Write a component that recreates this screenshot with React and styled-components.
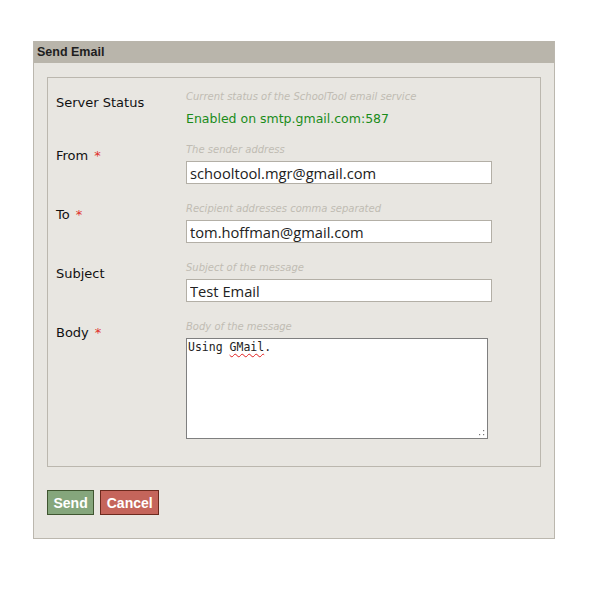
import React from "react";
import styled, { createGlobalStyle } from "styled-components";

const Global = createGlobalStyle`
  html, body {
    margin: 0;
    padding: 0;
    background: #ffffff;
  }
  body {
    font-family: "DejaVu Sans", sans-serif;
  }
`;

const fields = [
  { label: "From", hint: "The sender address", value: "schooltool.mgr@gmail.com", required: true },
  { label: "To", hint: "Recipient addresses comma separated", value: "tom.hoffman@gmail.com", required: true },
  { label: "Subject", hint: "Subject of the message", value: "Test Email" },
];

const App = () => {
  return (
    <Page>
      <Global />
      <Panel>
        <Header>Send Email</Header>
        <Fieldset>
          <Row>
            <Label>Server Status</Label>
            <Field>
              <Hint>Current status of the SchoolTool email service</Hint>
              <Status>Enabled on smtp.gmail.com:587</Status>
            </Field>
          </Row>
          {fields.map((f) => (
            <Row key={f.label}>
              <Label>
                {f.label}
                {f.required && <Star>*</Star>}
              </Label>
              <Field>
                <Hint>{f.hint}</Hint>
                <Input defaultValue={f.value} />
              </Field>
            </Row>
          ))}
          <Row $last>
            <Label>
              Body<Star>*</Star>
            </Label>
            <Field>
              <Hint>Body of the message</Hint>
              <TextBox>
                Using <Misspelled>GMail</Misspelled>.
                <Grip width="6" height="6" viewBox="0 0 6 6">
                  <rect x="4" y="0" width="1.2" height="1.2" fill="#777" />
                  <rect x="0" y="4" width="1.2" height="1.2" fill="#777" />
                  <rect x="4" y="4" width="1.2" height="1.2" fill="#777" />
                </Grip>
              </TextBox>
            </Field>
          </Row>
        </Fieldset>
        <Buttons>
          <Button $kind="send">Send</Button>
          <Button $kind="cancel">Cancel</Button>
        </Buttons>
      </Panel>
    </Page>
  );
};

export default App;

// styles

const Page = styled("div")`
  padding: 41px 0 0 33px;
`;

const Panel = styled("div")`
  width: 520px;
  background: #e8e6e1;
  border: 1px solid #bbb7ae;
  border-top: none;
  padding-bottom: 23px;
`;

const Header = styled("div")`
  height: 22px;
  line-height: 22px;
  background: #b9b5ab;
  padding-left: 3px;
  font-family: "Liberation Sans", sans-serif;
  font-weight: bold;
  font-size: 12.5px;
  color: #1e1e1e;
`;

const Fieldset = styled("div")`
  margin: 14px 13px 0 13px;
  border: 1px solid #bbb7ae;
  padding: 12px 0 27px 8px;
`;

const Row = styled("div")`
  display: grid;
  grid-template-columns: 130px 1fr;
  margin-bottom: ${(p) => (p.$last ? "0" : "18px")};

  &:first-child {
    margin-bottom: 15px;
  }
`;

const Label = styled("div")`
  font-size: 13px;
  line-height: 16px;
  margin-top: 5px;
  color: #111;
`;

const Star = styled("span")`
  color: #e0302a;
  margin-left: 6px;
  font-size: 13px;
`;

const Field = styled("div")`
  display: flex;
  flex-direction: column;
`;

const Hint = styled("div")`
  font-size: 10px;
  line-height: 14px;
  font-style: italic;
  color: #c0bcb3;
  margin-bottom: 4px;
`;

const Status = styled("div")`
  font-size: 12.5px;
  line-height: 18px;
  color: #1a8c1a;
  margin-top: 2px;
`;

const Input = styled("input")`
  box-sizing: border-box;
  width: 306px;
  height: 23px;
  border: 1px solid #b3afa6;
  background: #fff;
  padding: 0 3px;
  font-family: "Open Sans", sans-serif;
  font-size: 14.7px;
  color: #222;
  outline: none;
`;

const TextBox = styled("div")`
  position: relative;
  box-sizing: border-box;
  width: 302px;
  height: 101px;
  border: 1px solid #7f7f7f;
  background: #fff;
  padding: 1px 1px;
  font-family: "DejaVu Sans Mono", monospace;
  font-size: 11.5px;
  line-height: 15px;
  color: #222;
`;

const Misspelled = styled("span")`
  text-decoration: underline wavy #e02020;
  text-decoration-thickness: 1px;
  text-underline-offset: 2px;
`;

const Grip = styled("svg")`
  position: absolute;
  right: 2px;
  bottom: 2px;
`;

const Buttons = styled("div")`
  display: flex;
  gap: 6px;
  margin: 23px 0 0 13px;
`;

const Button = styled("button")`
  height: 25px;
  padding: 0 5.5px;
  font-family: "Liberation Sans", sans-serif;
  font-weight: bold;
  font-size: 14px;
  color: #fff;
  background: ${(p) => (p.$kind === "send" ? "#85a67c" : "#c5655b")};
  border: 1px solid ${(p) => (p.$kind === "send" ? "#3f5530" : "#6c2a1e")};
  cursor: pointer;
`;
